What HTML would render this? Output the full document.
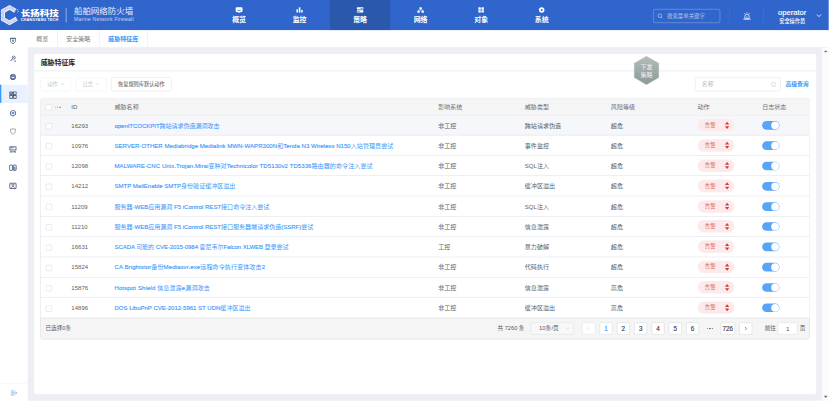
<!DOCTYPE html>
<html lang="zh-CN">
<head>
<meta charset="utf-8">
<title>船舶网络防火墙 - 威胁特征库</title>
<style>
*{box-sizing:border-box;margin:0;padding:0}
html,body{width:830px;height:402px;overflow:hidden;background:#edeff4}
body{font-family:"Liberation Sans","Noto Sans CJK SC",sans-serif;color:#5c5f65}
#app{position:absolute;left:0;top:0;width:1920px;height:930px;transform:scale(.432292);transform-origin:0 0;overflow:hidden;background:#edeff4;font-size:14px}
.abs{position:absolute}
/* header */
#hd{position:absolute;left:0;top:0;width:1920px;height:70px;background:#3066cb;color:#fff}
#hd .brand{position:absolute;left:48px;top:20.600px;width:90px;font-weight:900;font-size:22px;line-height:26px;letter-spacing:0;white-space:nowrap;transform:scaleY(.825);transform-origin:0 0}
#hd .brand2{position:absolute;left:48px;top:40.5px;font-size:8.6px;line-height:9px;font-weight:700;white-space:nowrap;letter-spacing:.42px}
#hd .vbar{position:absolute;left:152px;top:19px;width:2px;height:33px;background:rgba(255,255,255,.55)}
#hd .t1{position:absolute;left:171px;top:13px;font-size:19.6px;line-height:26px;white-space:nowrap;color:#eaf0fb}
#hd .t2{position:absolute;left:171px;top:37px;font-size:12px;line-height:14px;white-space:nowrap;color:#c3d2f0;letter-spacing:.42px}
.nav{position:absolute;left:483px;top:0;height:70px;display:flex}
.nav .it{width:140px;height:70px;position:relative;text-align:center}
.nav .it.on{background:#2a58ac}
.nav .it svg{position:absolute;left:61px;top:16px;width:18px;height:14px}
.nav .it span{position:absolute;left:0;right:0;top:35.600px;font-size:16px;line-height:20px;font-weight:700}
.sbox{position:absolute;left:1511px;top:20.5px;width:155px;height:32px;border:1px solid rgba(255,255,255,.55);border-radius:4px}
.sbox svg{position:absolute;left:8px;top:8px;width:14px;height:14px}
.sbox span{position:absolute;left:31px;top:0;line-height:30px;font-size:12.5px;color:#b9c9ec;white-space:nowrap}
.hsep{position:absolute;top:19px;width:1px;height:33px;background:rgba(255,255,255,.13)}
.user{position:absolute;left:1772px;width:121px;top:0;text-align:center}
.user .n{position:absolute;left:0;right:0;top:18.500px;font-size:17.600px;line-height:20px;-webkit-text-stroke:.35px #fff}
.user .r{position:absolute;left:0;right:0;top:42px;font-size:12px;line-height:16px;font-weight:500}
/* sidebar */
#sb{position:absolute;left:0;top:70px;width:64px;height:860px;background:#fff}
#sb .si{position:absolute;left:0;width:64px;height:42px}
#sb .si svg{position:absolute;left:22px;top:15.5px;width:16px;height:16px}
#sb .si.on{background:#e9f1ff;border-left:3px solid #3a98fb;top:125.5px;height:42.5px}
#sb .foot{position:absolute;left:0;top:816px;width:64px;height:44px;border-top:1px solid #eceef3}
/* tabs */
#tabs{position:absolute;left:64px;top:70px;width:1856px;height:39px;background:#fff;display:flex}
#tabs div{padding:0 20px;line-height:38px;font-size:14px;color:#7b7e85;border-right:1px solid #dfe2e8;height:39px}
#tabs div.on{color:#3a98fb;font-weight:700}
/* card */
#card{position:absolute;left:79px;top:125px;width:1809px;height:787px;background:#fff;border-radius:5px}
#card h3{position:absolute;left:15px;top:0;font-size:16px;line-height:40px;color:#1c1e22;font-weight:700}
#card .hl{position:absolute;left:0;top:38.200px;width:100%;height:1.600px;background:#e9ebef}
.btn{position:absolute;top:54px;height:32px;border:1px solid #d9dce3;border-radius:4px;font-size:12px;line-height:30px;text-align:center;background:#fff;white-space:nowrap}
.btn.dis{color:#c3c6cd;border-color:#e6e9ef}
.btn svg{width:11px;height:11px;vertical-align:-1px;margin-left:5px}
.inp{position:absolute;left:1529px;top:54px;width:198px;height:32px;border:1px solid #dcdfe6;border-radius:4px}
.inp span{position:absolute;left:15px;line-height:30px;font-size:13px;color:#b4b8c1}
.inp svg{position:absolute;left:173px;top:8px;width:15px;height:15px}
.adv{position:absolute;left:1738px;top:54px;line-height:32px;font-size:13.4px;color:#3a98fb;font-weight:700;white-space:nowrap}
/* table */
#tb{position:absolute;left:14px;top:102px;width:1780px;border:1px solid #c6cad1;border-radius:4px 4px 0 0;border-bottom:0}
.tr{position:relative;height:46.9px;border-bottom:1px solid #d6d9e0;white-space:nowrap}
.tr.th{height:38.5px;background:#f5f5f6;color:#6d7076;border-bottom:1px solid #c9cdd4}
.tr.hv{background:#f5f7fb}
.tr>*{position:absolute;top:1.5px;line-height:45.75px;font-size:14px}
.tr.th>*{line-height:37.5px;top:0}
.c0{left:11.500px;top:18px!important;width:14px;height:14px;border:1px solid #cfd3da;border-radius:2px;background:#fff}
.th .c0{top:13px!important}
.c0b{left:34px;top:18.5px!important;width:13px;height:2.6px;background:linear-gradient(90deg,#85888e 0 2.500px,transparent 2.500px 4.750px,#85888e 4.750px 7.250px,transparent 7.250px 9.500px,#85888e 9.500px 12px)}
.c1{left:71px;color:#5c5f65}
.c2{left:170.800px;color:#3a98fb;letter-spacing:0}
.th .c2{color:#6d7076;letter-spacing:0}
.c2 b{font-weight:400;-webkit-text-stroke:.3px #3a98fb}

.c3{left:919.500px}.c4{left:1120px}.c5{left:1319px}
.c6{left:1519.5px}.c7{left:1669px}
.pill{left:1519.5px;top:8.5px!important;width:85px;height:29px;border-radius:15px;background:#fdebeb;color:#e25b5b;font-size:12.5px!important;line-height:29px!important}
.pill b{position:absolute;left:17px;top:0;font-weight:400}
.pill svg{position:absolute;left:62.500px;top:4.500px;width:12px;height:20px}
.sw{left:1669px;top:13.5px!important;width:40px;height:20px;border-radius:10px;background:#58a4f7}
.sw i{position:absolute;left:21px;top:1px;width:18px;height:18px;border-radius:9px;background:#fff}
#ft{position:absolute;left:14px;top:610px;width:1780px;height:49.5px;background:#f5f5f6;border:1px solid #cdd1d8;border-radius:0 0 6px 6px;font-size:13px;color:#55585e}
#ft>*{position:absolute;top:9.5px;height:28px;line-height:28px;white-space:nowrap}
#ft .pb{width:30px;border:1px solid #cdd1d8;border-radius:3px;background:#fff;text-align:center;line-height:26px;font-weight:400;color:#3f4247;font-size:14.5px;-webkit-text-stroke:.35px #3f4247}
#ft .pb.on{color:#3a98fb;border-color:#cbd5e3;-webkit-text-stroke:.35px #3a98fb}
#ft .pb.dis{color:#c3c6cd;border-color:#dcdfe5;-webkit-text-stroke:0}
#ft .pb svg{position:absolute;left:9px;top:8px;width:10px;height:10px}
/* scrollbar */
#scr{position:absolute;left:1900.500px;top:110px;width:17px;height:817px;background:#fbfbfc}
</style>
</head>
<body>
<div id="app">

<div id="hd">
  <svg class="abs" style="left:2px;top:9.500px" width="44" height="52" viewBox="0 0 44 52">
    <path d="M33.600 15L20 7.100 4.500 16.050v17.900L20 42.900l16.700-9.700" fill="none" stroke="#fff" stroke-width="10" stroke-linejoin="miter"/>
    <path d="M33.600 15L20 7.100 4.500 16.050v17.900L20 42.900l16.700-9.700" fill="none" stroke="#3066cb" stroke-width="1.100" stroke-linecap="round" stroke-dasharray="0.100 2.700" transform="translate(20 25) scale(1.150) translate(-20 -25)"/>
    <path d="M33.600 15L20 7.100 4.500 16.050v17.900L20 42.900l16.700-9.700" fill="none" stroke="#3066cb" stroke-width="1.100" stroke-linecap="round" stroke-dasharray="0.100 2.700"/>
    <path d="M33.600 15L20 7.100 4.500 16.050v17.900L20 42.900l16.700-9.700" fill="none" stroke="#3066cb" stroke-width="1.100" stroke-linecap="round" stroke-dasharray="0.100 2.700" transform="translate(20 25) scale(0.850) translate(-20 -25)"/>
    <circle cx="38.500" cy="12.500" r="1.300" fill="#fff"/><circle cx="41" cy="16" r="1.100" fill="#fff"/><circle cx="38" cy="18" r="1" fill="#fff"/>
  </svg>
  <div class="brand">长扬科技</div>
  <div class="brand2">CHANGYANG TECH</div>
  <div class="vbar"></div>
  <div class="t1">船舶网络防火墙</div>
  <div class="t2">Marine Network Firewall</div>

  <div class="nav">
    <div class="it"><svg viewBox="0 0 18 14"><rect x="1" y="1" width="16" height="10.500" rx="2" fill="#fff"/><rect x="5.500" y="11.500" width="7" height="1.600" fill="#fff"/><rect x="5" y="7" width="8" height="1.600" fill="#3066cb"/></svg><span>概览</span></div>
    <div class="it"><svg viewBox="0 0 18 14"><rect x="1.800" y="5.500" width="3.600" height="7.500" fill="#fff"/><rect x="7.200" y="1" width="3.600" height="12" fill="#fff"/><rect x="12.600" y="7" width="3.600" height="6" fill="#fff"/></svg><span>监控</span></div>
    <div class="it on"><svg viewBox="0 0 18 14"><rect x="1.500" y="1" width="15" height="5" rx="1" fill="#fff"/><rect x="1.500" y="7.800" width="15" height="5" rx="1" fill="#fff"/><rect x="10" y="2.800" width="5" height="1.400" fill="#2a58ac"/><rect x="3" y="9.600" width="5" height="1.400" fill="#2a58ac"/></svg><span>策略</span></div>
    <div class="it"><svg viewBox="0 0 18 14"><rect x="6.300" y="0.500" width="5.400" height="5.400" rx="1" fill="#fff"/><rect x="1.500" y="8.300" width="5.400" height="5.400" rx="1" fill="#fff"/><rect x="11.100" y="8.300" width="5.400" height="5.400" rx="1" fill="#fff"/><path d="M9 5.500v2M4.200 8.500V7.200h9.600v1.300" stroke="#fff" stroke-width="1.200" fill="none"/></svg><span>网络</span></div>
    <div class="it"><svg viewBox="0 0 18 14"><rect x="2.500" y="0.800" width="5.800" height="5.600" rx="1.200" fill="#fff"/><rect x="9.700" y="0.800" width="5.800" height="5.600" rx="1.200" fill="#fff"/><rect x="2.500" y="7.600" width="5.800" height="5.600" rx="1.200" fill="#fff"/><rect x="9.700" y="7.600" width="5.800" height="5.600" rx="1.200" fill="#fff"/></svg><span>对象</span></div>
    <div class="it"><svg viewBox="0 0 18 14"><circle cx="9" cy="7" r="4.300" fill="none" stroke="#fff" stroke-width="4.200"/></svg><span>系统</span></div>
  </div>

  <div class="sbox"><svg viewBox="0 0 14 14"><circle cx="6.3" cy="6.3" r="4.3" fill="none" stroke="#dfe8fa" stroke-width="1.3"/><path d="M9.6 9.6l2.6 2.6" stroke="#dfe8fa" stroke-width="1.3"/></svg><span>搜索菜单关键字</span></div>
  <div class="hsep" style="left:1687px"></div>
  <div class="hsep" style="left:1766px"></div>
  <svg class="abs" style="left:1717px;top:25px" width="22" height="22" viewBox="0 0 22 22"><path d="M2.500 19.500h17" stroke="#fff" stroke-width="1.800"/><path d="M6 17.500v-4.500a5 5 0 0 1 10 0v4.500z" fill="none" stroke="#fff" stroke-width="1.700"/><path d="M11 12.500v3" stroke="#fff" stroke-width="1.500"/><path d="M11 3.500v2.600M5 5.500l1.900 2.200M17 5.500l-1.900 2.200" stroke="#fff" stroke-width="1.600" fill="none"/></svg>
  <div class="user"><div class="n">operator</div><div class="r">安全操作员</div></div>
  <svg class="abs" style="left:1888px;top:30px" width="13" height="12" viewBox="0 0 13 12"><path d="M1.5 3.5l5 5 5-5" stroke="#fff" stroke-width="2" fill="none"/></svg>
</div>

<div class="abs" style="left:0;top:70px;width:300px;height:39px;background:#fff"></div>
<div id="sb">
  <div class="si" style="top:0"><svg viewBox="0 0 16 16"><path d="M2.200 2.600h11.600v5.600c0 3.300-2.300 5.400-5.800 6.800-3.500-1.400-5.800-3.500-5.800-6.800z" fill="none" stroke="#2f3b59" stroke-width="1.500"/><path d="M2 2.600h12" stroke="#2f3b59" stroke-width="1.500"/><circle cx="8" cy="8" r="2.600" fill="#3f72db"/><circle cx="8" cy="8" r=".900" fill="#fff"/></svg></div>
  <div class="si" style="top:42px"><svg viewBox="0 0 16 16"><circle cx="9.800" cy="5.200" r="3.600" fill="none" stroke="#2f3b59" stroke-width="1.400"/><path d="M7.300 7.800L1.500 13.600M3.600 11.600l1.800 1.800M5.600 9.600l1.600 1.600M8 3.500l3.500 3.500" stroke="#2f3b59" stroke-width="1.300" fill="none"/><rect x="11.500" y="11.500" width="3.800" height="3.800" fill="#6ba4f7"/></svg></div>
  <div class="si" style="top:84px"><svg viewBox="0 0 16 16"><circle cx="8" cy="8" r="6.400" fill="none" stroke="#2f3b59" stroke-width="1.700"/><rect x="4.600" y="4.800" width="6.800" height="6.400" fill="none" stroke="#2f3b59" stroke-width="1.200"/><rect x="5.800" y="5.200" width="4.400" height="3.200" fill="#3f72db"/><path d="M4 13h8" stroke="#2f3b59" stroke-width="1.200"/></svg></div>
  <div class="si on"><svg style="left:18px;top:15px;width:18px;height:18px" viewBox="0 0 16 16"><rect x="1.400" y="1.400" width="5.600" height="5.600" fill="none" stroke="#2f3b59" stroke-width="1.500"/><rect x="9" y="1.400" width="5.600" height="5.600" fill="none" stroke="#2f3b59" stroke-width="1.500"/><rect x="1.400" y="9" width="5.600" height="5.600" fill="none" stroke="#2f3b59" stroke-width="1.500"/><rect x="9" y="9" width="5.600" height="5.600" fill="none" stroke="#2f3b59" stroke-width="1.500"/><rect x="2.600" y="2.600" width="3.200" height="3.200" fill="#3f72db"/></svg></div>
  <div class="si" style="top:168px"><svg viewBox="0 0 16 16"><path d="M8 1.200l5.800 3.200v6.800L8 14.400l-5.800-3.200V4.400z" fill="none" stroke="#2f3b59" stroke-width="1.600"/><rect x="5.200" y="5" width="5.600" height="5.200" fill="#3f72db"/><rect x="6.800" y="6.600" width="2.400" height="2" fill="#fff"/><path d="M8 14v1.800" stroke="#2f3b59" stroke-width="1.200"/></svg></div>
  <div class="si" style="top:210px"><svg viewBox="0 0 16 16"><path d="M2.600 2.400h10.800v5.400c0 3-2 5-5.400 6.600-3.400-1.600-5.400-3.600-5.400-6.600z" fill="none" stroke="#6a7388" stroke-width="1.400"/></svg></div>
  <div class="si" style="top:252px"><svg style="left:21px;top:14.500px;width:18px;height:18px" viewBox="0 0 16 16"><rect x="1.600" y="2.400" width="12.800" height="6.400" fill="none" stroke="#2f3b59" stroke-width="1.500"/><rect x="2.400" y="3" width="6.500" height="2.400" fill="#4a8cf0"/><path d="M3 12.600h10M3.600 10.600v4M12.400 10.600v4" stroke="#2f3b59" stroke-width="1.400" fill="none"/></svg></div>
  <div class="si" style="top:294px"><svg style="left:21px;top:14.500px;width:18px;height:18px" viewBox="0 0 16 16"><rect x="1.200" y="2.600" width="6" height="10.800" rx="1" fill="none" stroke="#2f3b59" stroke-width="1.500"/><rect x="8.800" y="2.600" width="6" height="10.800" rx="1" fill="none" stroke="#2f3b59" stroke-width="1.500"/><rect x="10.600" y="6" width="2.400" height="6.400" fill="#3f72db"/></svg></div>
  <div class="si" style="top:336px"><svg style="left:21px;top:14.500px;width:18px;height:18px" viewBox="0 0 16 16"><rect x="1.400" y="2.600" width="13.200" height="10.800" rx="1" fill="none" stroke="#2f3b59" stroke-width="1.500"/><circle cx="8" cy="6.600" r="1.900" fill="none" stroke="#2f3b59" stroke-width="1.200"/><path d="M4 12.600c.6-2.200 2.100-3.200 4-3.200s3.400 1 4 3.200" fill="none" stroke="#2f3b59" stroke-width="1.200"/><path d="M3 4.600h2M11 4.600h2" stroke="#2f3b59" stroke-width="1"/></svg></div>
  <div class="foot"><svg class="abs" style="left:23.500px;top:15.500px" width="16" height="13" viewBox="0 0 16 13"><path d="M1 1.300h8.500M1 6h11M1 10.700h8.500" stroke="#3d96f5" stroke-width="1.600" fill="none"/><path d="M11.500 3l3.600 3-3.600 3" stroke="#3d96f5" stroke-width="1.300" fill="none"/></svg></div>
</div>

<div id="tabs"><div>概览</div><div>安全策略</div><div class="on">威胁特征库</div></div>

<div id="card">
  <h3>威胁特征库</h3>
  <div class="hl"></div>
  <div class="btn dis" style="left:15px;width:71px">动作<svg viewBox="0 0 12 12"><path d="M2 4l4 4 4-4" stroke="#c3c6cd" stroke-width="1.300" fill="none"/></svg></div>
  <div class="btn dis" style="left:96px;width:72px">日志<svg viewBox="0 0 12 12"><path d="M2 4l4 4 4-4" stroke="#c3c6cd" stroke-width="1.300" fill="none"/></svg></div>
  <div class="btn" style="left:178px;width:140px;color:#4f5258">恢复规则库默认动作</div>

  <svg class="abs" style="left:1386px;top:4px" width="61" height="68" viewBox="0 0 61 68">
    <defs><linearGradient id="hx" x1="0" y1="0" x2="0" y2="1"><stop offset="0" stop-color="#b3bdbc"/><stop offset="1" stop-color="#8a9998"/></linearGradient></defs>
    <path d="M30.500 1L59 17.500v33L30.500 67 2 50.500v-33z" fill="url(#hx)" stroke="#b9c3c2" stroke-width="1"/>
    <text x="30.5" y="31.3" font-family="'Liberation Sans','Noto Sans CJK SC',sans-serif" font-size="14" fill="#fff" fill-opacity=".85" text-anchor="middle">下发</text>
    <text x="30.5" y="48.3" font-family="'Liberation Sans','Noto Sans CJK SC',sans-serif" font-size="14" fill="#fff" fill-opacity=".85" text-anchor="middle">策略</text>
  </svg>

  <div class="inp"><span>名称</span><svg viewBox="0 0 14 14"><circle cx="6.300" cy="6.300" r="4.500" fill="none" stroke="#c3c6cd" stroke-width="1.200"/><path d="M9.600 9.600l2.800 2.800" stroke="#c3c6cd" stroke-width="1.200"/></svg></div>
  <div class="adv">高级查询</div>

  <div id="tb">
    <div class="tr th"><i class="c0"></i><span class="c0b"></span><span class="c1">ID</span><span class="c2">威胁名称</span><span class="c3">影响系统</span><span class="c4">威胁类型</span><span class="c5">风险等级</span><span class="c6">动作</span><span class="c7">日志状态</span></div>
    <div class="tr hv"><i class="c0"></i><span class="c1">16293</span><span class="c2" style="letter-spacing:-0.115px"><b>openITCOCKPIT</b>跨站请求伪造漏洞攻击</span><span class="c3">非工控</span><span class="c4">跨站请求伪造</span><span class="c5">超危</span><span class="pill"><b>告警</b><svg viewBox="0 0 12 20"><path d="M1 8.200L6 1.800l5 6.400zM1 11.800L6 18.200l5-6.400z" fill="#d23c3b"/></svg></span><span class="sw"><i></i></span></div>
    <div class="tr"><i class="c0"></i><span class="c1">10976</span><span class="c2" style="letter-spacing:0.061px"><b>SERVER-OTHER Mediabridge Medialink MWN-WAPR300N</b>和<b>Tenda N3 Wireless N150</b>入站管理员尝试</span><span class="c3">非工控</span><span class="c4">事件监控</span><span class="c5">超危</span><span class="pill"><b>告警</b><svg viewBox="0 0 12 20"><path d="M1 8.200L6 1.800l5 6.400zM1 11.800L6 18.200l5-6.400z" fill="#d23c3b"/></svg></span><span class="sw"><i></i></span></div>
    <div class="tr"><i class="c0"></i><span class="c1">12098</span><span class="c2" style="letter-spacing:0.134px"><b>MALWARE-CNC Unix.Trojan.Mirai</b>变种对<b>Technicolor TD5130v2 TD5336</b>路由器的命令注入尝试</span><span class="c3">非工控</span><span class="c4">SQL注入</span><span class="c5">超危</span><span class="pill"><b>告警</b><svg viewBox="0 0 12 20"><path d="M1 8.200L6 1.800l5 6.400zM1 11.800L6 18.200l5-6.400z" fill="#d23c3b"/></svg></span><span class="sw"><i></i></span></div>
    <div class="tr"><i class="c0"></i><span class="c1">14212</span><span class="c2" style="letter-spacing:-0.029px"><b>SMTP MailEnable SMTP</b>身份验证缓冲区溢出</span><span class="c3">非工控</span><span class="c4">缓冲区溢出</span><span class="c5">超危</span><span class="pill"><b>告警</b><svg viewBox="0 0 12 20"><path d="M1 8.200L6 1.800l5 6.400zM1 11.800L6 18.200l5-6.400z" fill="#d23c3b"/></svg></span><span class="sw"><i></i></span></div>
    <div class="tr"><i class="c0"></i><span class="c1">11209</span><span class="c2" style="letter-spacing:-0.056px">服务器<b>-WEB</b>应用漏洞 <b>F5 iControl REST</b>接口命令注入尝试</span><span class="c3">非工控</span><span class="c4">SQL注入</span><span class="c5">超危</span><span class="pill"><b>告警</b><svg viewBox="0 0 12 20"><path d="M1 8.200L6 1.800l5 6.400zM1 11.800L6 18.200l5-6.400z" fill="#d23c3b"/></svg></span><span class="sw"><i></i></span></div>
    <div class="tr"><i class="c0"></i><span class="c1">11210</span><span class="c2" style="letter-spacing:-0.063px">服务器<b>-WEB</b>应用漏洞 <b>F5 iControl REST</b>接口服务器端请求伪造<b>(SSRF)</b>尝试</span><span class="c3">非工控</span><span class="c4">信息泄露</span><span class="c5">超危</span><span class="pill"><b>告警</b><svg viewBox="0 0 12 20"><path d="M1 8.200L6 1.800l5 6.400zM1 11.800L6 18.200l5-6.400z" fill="#d23c3b"/></svg></span><span class="sw"><i></i></span></div>
    <div class="tr"><i class="c0"></i><span class="c1">16631</span><span class="c2" style="letter-spacing:-0.200px"><b>SCADA</b> 可能的 <b>CVE-2015-0984</b> 霍尼韦尔<b>Falcon XLWEB</b> 登录尝试</span><span class="c3">工控</span><span class="c4">暴力破解</span><span class="c5">超危</span><span class="pill"><b>告警</b><svg viewBox="0 0 12 20"><path d="M1 8.200L6 1.800l5 6.400zM1 11.800L6 18.200l5-6.400z" fill="#d23c3b"/></svg></span><span class="sw"><i></i></span></div>
    <div class="tr"><i class="c0"></i><span class="c1">15824</span><span class="c2" style="letter-spacing:0.207px"><b>CA Brightstor</b>备份<b>Mediasvr.exe</b>远程命令执行变体攻击<b>2</b></span><span class="c3">非工控</span><span class="c4">代码执行</span><span class="c5">超危</span><span class="pill"><b>告警</b><svg viewBox="0 0 12 20"><path d="M1 8.200L6 1.800l5 6.400zM1 11.800L6 18.200l5-6.400z" fill="#d23c3b"/></svg></span><span class="sw"><i></i></span></div>
    <div class="tr"><i class="c0"></i><span class="c1">15876</span><span class="c2" style="letter-spacing:0.260px"><b>Hotspot Shield</b> 信息泄露<b>e</b>漏洞攻击</span><span class="c3">非工控</span><span class="c4">信息泄露</span><span class="c5">高危</span><span class="pill"><b>告警</b><svg viewBox="0 0 12 20"><path d="M1 8.200L6 1.800l5 6.400zM1 11.800L6 18.200l5-6.400z" fill="#d23c3b"/></svg></span><span class="sw"><i></i></span></div>
    <div class="tr" style="border-bottom:0"><i class="c0"></i><span class="c1">14896</span><span class="c2" style="letter-spacing:-0.062px"><b>DOS LibuPnP CVE-2012-5961 ST UDN</b>缓冲区溢出</span><span class="c3">非工控</span><span class="c4">缓冲区溢出</span><span class="c5">高危</span><span class="pill"><b>告警</b><svg viewBox="0 0 12 20"><path d="M1 8.200L6 1.800l5 6.400zM1 11.800L6 18.200l5-6.400z" fill="#d23c3b"/></svg></span><span class="sw"><i></i></span></div>
  </div>

  <div id="ft">
    <span style="left:11px">已选择0条</span>
    <span style="left:1057px">共 7260 条</span>
    <span style="left:1133px;width:100px;border:1px solid #d9dce2;border-radius:3px;background:#f8f8f9;line-height:26px;padding-left:19px;color:#55585e;font-size:13.500px">10条/页<svg class="abs" style="left:80px;top:8px" width="10" height="10" viewBox="0 0 12 12"><path d="M2 4l4 4 4-4" stroke="#c3c6cd" stroke-width="1.400" fill="none"/></svg></span>
    <span class="pb dis" style="left:1253px"><svg viewBox="0 0 10 10"><path d="M6.500 1.500L3 5l3.500 3.500" stroke="#bfc3ca" stroke-width="1.200" fill="none"/></svg></span>
    <span class="pb on" style="left:1293px">1</span>
    <span class="pb" style="left:1333px">2</span>
    <span class="pb" style="left:1373px">3</span>
    <span class="pb" style="left:1413px">4</span>
    <span class="pb" style="left:1453px">5</span>
    <span class="pb" style="left:1493px">6</span>
    <span style="left:1541.500px;top:22.500px;width:13px;height:2.600px;background:linear-gradient(90deg,#5d6066 0 2.600px,transparent 2.600px 5.200px,#5d6066 5.200px 7.800px,transparent 7.800px 10.400px,#5d6066 10.400px 13px)"></span>
    <span class="pb" style="left:1573px;width:33px">726</span>
    <span class="pb" style="left:1616px"><svg viewBox="0 0 10 10"><path d="M3.500 1.500L7 5 3.500 8.500" stroke="#3f4247" stroke-width="1.300" fill="none"/></svg></span>
    <span style="left:1675px">前往</span>
    <span style="left:1705px;width:46px;border:1px solid #d4d8de;border-radius:3px;background:#fff;text-align:center;line-height:26px;font-size:14px">1</span>
    <span style="left:1756px">页</span>
  </div>
</div>

<div id="scr">
  <svg class="abs" style="left:4px;top:5.500px" width="10" height="5.500" viewBox="0 0 9 6" preserveAspectRatio="none"><path d="M0 6L4.500 0 9 6z" fill="#6f6f6f"/></svg>
  <svg class="abs" style="left:4px;top:805px" width="10" height="5.500" viewBox="0 0 9 6" preserveAspectRatio="none"><path d="M0 0l4.500 6L9 0z" fill="#6f6f6f"/></svg>
</div>
<div class="abs" style="left:1917px;top:0;width:3px;height:930px;background:#fff"></div>
<div class="abs" style="left:0;top:927px;width:1920px;height:3px;background:#fff"></div>

</div>
</body>
</html>
